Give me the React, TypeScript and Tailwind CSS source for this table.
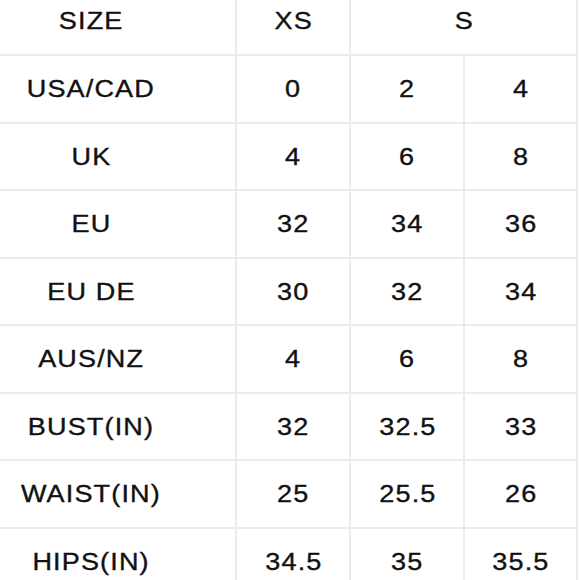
import React from "react";

const rows: [string, string, string, string][] = [
  ["USA/CAD", "0", "2", "4"],
  ["UK", "4", "6", "8"],
  ["EU", "32", "34", "36"],
  ["EU DE", "30", "32", "34"],
  ["AUS/NZ", "4", "6", "8"],
  ["BUST(IN)", "32", "32.5", "33"],
  ["WAIST(IN)", "25", "25.5", "26"],
  ["HIPS(IN)", "34.5", "35", "35.5"],
];

const cell =
  "bg-white flex items-center justify-center pt-[2px] text-[23.5px] text-[#111111]";

const Label = ({ children }: { children: React.ReactNode }) => (
  <span className="inline-block whitespace-pre tracking-[1px] pl-[1px] scale-x-[1.15] [-webkit-text-stroke:0.35px_#111111]">
    {children}
  </span>
);

export default function App() {
  return (
    <div
      className="w-[580px] h-[580px] overflow-hidden bg-white"
      style={{ fontFamily: '"Liberation Sans", Arial, sans-serif' }}
    >
      <div className="-ml-[54px] -mt-[12px] w-[632px] grid grid-cols-[289px_112px_112px_111px] grid-rows-[66px_repeat(8,65.5px)] gap-[2px] bg-[#ebebeb] border-r-2 border-[#ebebeb]">
        <div className={cell}>
          <Label>SIZE</Label>
        </div>
        <div className={cell}>
          <Label>XS</Label>
        </div>
        <div className={`${cell} col-span-2`}>
          <Label>S</Label>
        </div>
        {rows.map((r) =>
          r.map((v, i) => (
            <div key={r[0] + i} className={cell}>
              <Label>{v}</Label>
            </div>
          ))
        )}
      </div>
    </div>
  );
}
